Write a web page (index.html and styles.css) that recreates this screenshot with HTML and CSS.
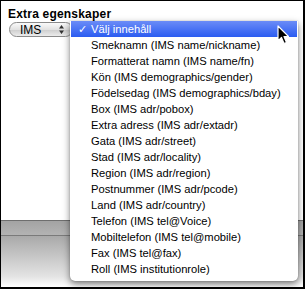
FILE: index.html
```html
<!DOCTYPE html>
<html lang="sv">
<head>
  <meta charset="UTF-8" />
  <title>Extra egenskaper</title>
  <link rel="stylesheet" href="styles.css">
</head>
<body>
<div class="frame">
  <div class="content">
    <h3 class="title">Extra egenskaper</h3>
    <div class="select">
      <span class="select-label">IMS</span>
      <svg class="select-arrows" width="5" height="9" viewBox="0 0 5 9">
        <path d="M2.5 0 L5 3.5 L0 3.5 Z M2.5 9 L5 5.5 L0 5.5 Z" fill="#333"/>
      </svg>
    </div>
  </div>
  <div class="bottom-bar">
    <div class="bar-strip"></div>
    <div class="bar-fade"></div>
  </div>

  <ul class="menu">
    <li class="menu-item selected"><span class="check">✓</span>Välj innehåll</li>
    <li class="menu-item">Smeknamn (IMS name/nickname)</li>
    <li class="menu-item">Formatterat namn (IMS name/fn)</li>
    <li class="menu-item">Kön (IMS demographics/gender)</li>
    <li class="menu-item">Födelsedag (IMS demographics/bday)</li>
    <li class="menu-item">Box (IMS adr/pobox)</li>
    <li class="menu-item">Extra adress (IMS adr/extadr)</li>
    <li class="menu-item">Gata (IMS adr/street)</li>
    <li class="menu-item">Stad (IMS adr/locality)</li>
    <li class="menu-item">Region (IMS adr/region)</li>
    <li class="menu-item">Postnummer (IMS adr/pcode)</li>
    <li class="menu-item">Land (IMS adr/country)</li>
    <li class="menu-item">Telefon (IMS tel@Voice)</li>
    <li class="menu-item">Mobiltelefon (IMS tel@mobile)</li>
    <li class="menu-item">Fax (IMS tel@fax)</li>
    <li class="menu-item">Roll (IMS institutionrole)</li>
  </ul>

  <svg class="cursor" width="13" height="20" viewBox="0 0 13 20">
    <path d="M1 1 L1 16 L4.5 12.5 L7 18.5 L9.5 17.5 L7 11.5 L11.5 11.5 Z" fill="#000" stroke="#fff" stroke-width="1.2" stroke-linejoin="round"/>
  </svg>
</div>
</body>
</html>
```

FILE: styles.css
```css
body {
  margin: 0;
  font-family: "Liberation Sans", Arial, sans-serif;
  background-color: #fff;
  color: #000;
}
.frame {
  position: relative;
  width: 305px;
  height: 289px;
  box-sizing: border-box;
  border: 1px solid #000;
  border-right-width: 2px;
  border-bottom-width: 2px;
  display: flex;
  flex-direction: column;
  overflow: hidden;
}
.content {
  flex: 1;
  padding: 0 7px;
}
.title {
  margin: 6px 0 1px;
  font-size: 12px;
  line-height: 14px;
  font-weight: bold;
  letter-spacing: 0.2px;
}
.select {
  display: flex;
  align-items: center;
  justify-content: space-between;
  width: 64px;
  height: 15px;
  margin-left: 1px;
  padding: 0 8px 0 10px;
  box-sizing: border-box;
  border: 1px solid #8a8a8a;
  border-radius: 8px;
  background: linear-gradient(#fafafa, #e2e2e2 50%, #cfcfcf 55%, #ececec);
  font-size: 12px;
}
.select-arrows {
  display: block;
}
.bottom-bar {
  height: 67px;
  display: flex;
  flex-direction: column;
}
.bar-strip {
  height: 14px;
  border-top: 1px solid #6e6e6e;
  border-bottom: 1px solid #7a7a7a;
  background: linear-gradient(#a3a3a3, #b3b3b3);
}
.bar-fade {
  flex: 1;
  background: linear-gradient(#a9a9a9, #e4e4e4 80%, #fff);
}
.menu {
  position: absolute;
  left: 69px;
  top: 20px;
  width: 228px;
  margin: 0;
  padding: 0 0 4px;
  list-style: none;
  background-color: #fff;
  border-radius: 0 0 5px 5px;
  box-shadow: 0 3px 7px rgba(0, 0, 0, 0.5), 0 0 1px rgba(0, 0, 0, 0.4);
}
.menu-item {
  position: relative;
  height: 16px;
  line-height: 16px;
  padding-left: 21px;
  font-size: 11.2px;
  white-space: nowrap;
}
.menu-item.selected {
  margin: 0 1px;
  padding-left: 20px;
  color: #fff;
  background: linear-gradient(#6b8cf7, #2b5cf1);
}
.check {
  position: absolute;
  left: 7px;
  top: 0;
}
.cursor {
  position: absolute;
  left: 276px;
  top: 24px;
}
```
